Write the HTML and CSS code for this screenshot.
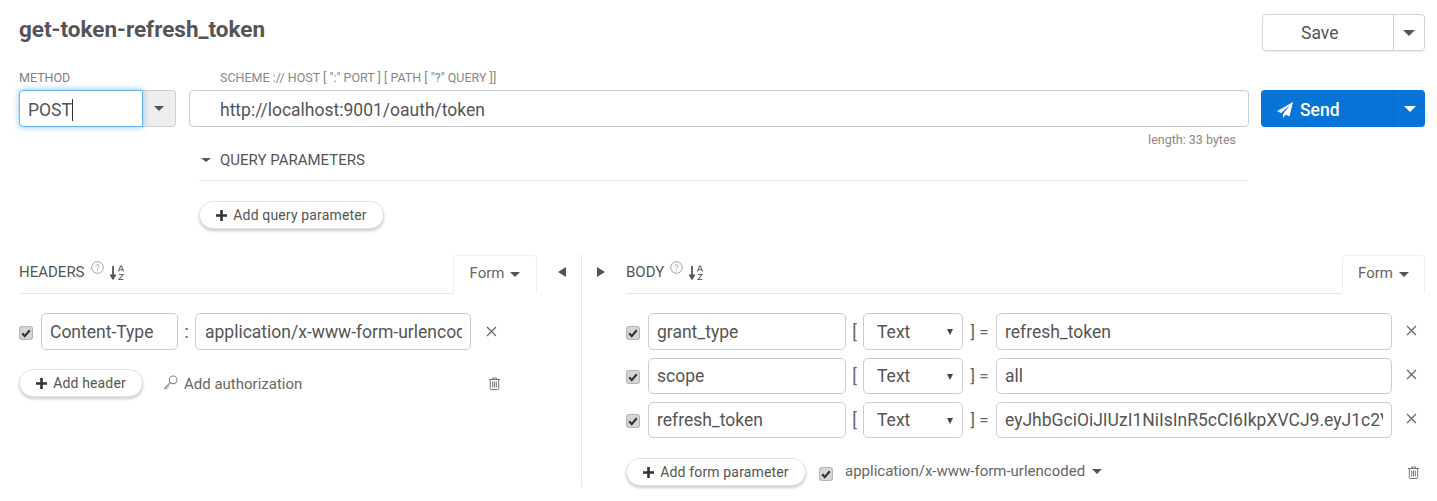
FILE: index.html
```html
<!DOCTYPE html>
<html lang="en">
<head>
<meta charset="utf-8">
<title>get-token-refresh_token</title>
<link rel="stylesheet" href="styles.css">
</head>
<body>
<svg class="defs" width="0" height="0" aria-hidden="true">
  <symbol id="check" viewBox="0 0 13 13">
    <rect x=".5" y=".5" width="12" height="12" rx="2.5" fill="#d6d6d6" stroke="#b4b4b4"/>
    <path d="M3 6.8 5.3 9.4 10 3.9" fill="none" stroke="#333" stroke-width="2"/>
  </symbol>
  <symbol id="help" viewBox="0 0 13 13">
    <circle cx="6.5" cy="6.5" r="5.8" fill="none" stroke="#999" stroke-width=".9"/>
    <path d="M4.8 5.2C4.9 3.2 8.2 3.3 8.2 5.1 8.2 6.3 6.5 6.4 6.5 7.8M6.5 8.9v1" fill="none" stroke="#999" stroke-width=".9"/>
  </symbol>
  <symbol id="sort" viewBox="0 0 15 16">
    <path d="M3 1v11M.5 9.5 3 13.5 5.500 9.500" fill="none" stroke="#555" stroke-width="1.800"/>
    <path d="M8.500 6.500 10.500 1h1l2 5.500M9.300 4.800h3.400M9 9.500h4L9 14.500h4.300" fill="none" stroke="#666" stroke-width="1.100"/>
  </symbol>
  <symbol id="trash" viewBox="0 0 12 13">
    <path d="M.5 2.500h11M4 2.500V1h4v1.500M1.800 2.500v9.200c0 .5.400.8.800.8h6.800c.4 0 .8-.3.800-.8V2.500M4.200 4.500v6M6 4.500v6M7.800 4.500v6" fill="none" stroke="#777" stroke-width="1"/>
  </symbol>
  <symbol id="x" viewBox="0 0 11 11">
    <path d="M1 1l9 9M10 1l-9 9" fill="none" stroke="#666" stroke-width="1.200"/>
  </symbol>
  <symbol id="plus" viewBox="0 0 11 11">
    <path d="M5.500 0v11M0 5.500h11" fill="none" stroke="#333" stroke-width="2.600"/>
  </symbol>
</svg>

<main class="page">
  <header class="top">
    <h1 class="title">get-token-refresh_token</h1>
    <div class="split save">
      <span class="split-main">Save</span>
      <span class="split-arrow"><i class="tri tri-down tri-dark"></i></span>
    </div>
  </header>

  <section class="request">
    <div class="method-col">
      <div class="label">METHOD</div>
      <div class="method">
        <div class="method-input">POST<span class="caret"></span></div>
        <div class="method-arrow"><i class="tri tri-small"></i></div>
      </div>
    </div>
    <div class="url-col">
      <div class="label label-url">SCHEME :// HOST [ ":" PORT ] [ PATH [ "?" QUERY ]]</div>
      <div class="url-input">http://localhost:9001/oauth/token</div>
      <div class="length">length: 33 bytes</div>
      <div class="query-head"><i class="tri tri-small tri-query"></i>QUERY PARAMETERS</div>
      <button class="pill pill-query"><svg class="plus"><use href="#plus"/></svg>Add query parameter</button>
    </div>
    <div class="split send">
      <span class="split-main">
        <svg class="plane" viewBox="0 0 16 16"><path d="M16 0 0 9.200l4.200 1.800L13 3.200 6 12v4l2.600-3.200 3.900 1.700Z" fill="#fff"/></svg>Send
      </span>
      <span class="split-arrow"><i class="tri tri-down tri-white"></i></span>
    </div>
  </section>

  <section class="panels">
    <div class="panel panel-headers">
      <div class="panel-head">
        <span class="panel-title">HEADERS</span>
        <svg class="help"><use href="#help"/></svg>
        <svg class="sort"><use href="#sort"/></svg>
        <span class="tab">Form <i class="tri tri-small"></i></span>
      </div>
      <div class="row">
        <svg class="check"><use href="#check"/></svg>
        <div class="field field-hname">Content-Type</div>
        <span class="sep">:</span>
        <div class="field field-hval"><span class="clip">application/x-www-form-urlencoded</span></div>
        <svg class="x x-head"><use href="#x"/></svg>
      </div>
      <div class="actions">
        <button class="pill pill-header"><svg class="plus"><use href="#plus"/></svg>Add header</button>
        <span class="auth">
          <svg class="key" viewBox="0 0 14 14"><circle cx="9.500" cy="4.500" r="3.600" fill="none" stroke="#888"/><path d="M7 7 1 13M2.500 11.500l1.500 1.500M4 10l1.200 1.200" fill="none" stroke="#888"/></svg>Add authorization
        </span>
        <svg class="trash trash-head"><use href="#trash"/></svg>
      </div>
    </div>

    <div class="toggle toggle-left"><i class="tri tri-left"></i></div>
    <div class="toggle toggle-right"><i class="tri tri-right"></i></div>

    <div class="panel panel-body">
      <div class="panel-head">
        <span class="panel-title">BODY</span>
        <svg class="help"><use href="#help"/></svg>
        <svg class="sort"><use href="#sort"/></svg>
        <span class="tab">Form <i class="tri tri-small"></i></span>
      </div>
      <div class="body-rows">
        <div class="row">
          <svg class="check"><use href="#check"/></svg>
          <div class="field field-name">grant_type</div>
          <span class="bracket">[</span>
          <div class="field field-type">Text<i class="tri tri-select"></i></div>
          <span class="bracket bracket-end">] =</span>
          <div class="field field-val">refresh_token</div>
          <svg class="x"><use href="#x"/></svg>
        </div>
        <div class="row">
          <svg class="check"><use href="#check"/></svg>
          <div class="field field-name">scope</div>
          <span class="bracket">[</span>
          <div class="field field-type">Text<i class="tri tri-select"></i></div>
          <span class="bracket bracket-end">] =</span>
          <div class="field field-val">all</div>
          <svg class="x"><use href="#x"/></svg>
        </div>
        <div class="row">
          <svg class="check"><use href="#check"/></svg>
          <div class="field field-name">refresh_token</div>
          <span class="bracket">[</span>
          <div class="field field-type">Text<i class="tri tri-select"></i></div>
          <span class="bracket bracket-end">] =</span>
          <div class="field field-val"><span class="clip">eyJhbGciOiJIUzI1NiIsInR5cCI6IkpXVCJ9.eyJ1c2VyX25hbWUiOiJhZG1pbiJ9</span></div>
          <svg class="x"><use href="#x"/></svg>
        </div>
      </div>
      <div class="body-actions">
        <button class="pill pill-form"><svg class="plus"><use href="#plus"/></svg>Add form parameter</button>
        <svg class="check check-enc"><use href="#check"/></svg>
        <span class="enc">application/x-www-form-urlencoded <i class="tri tri-small tri-enc"></i></span>
        <svg class="trash trash-body"><use href="#trash"/></svg>
      </div>
    </div>
  </section>
</main>
</body>
</html>
```

FILE: styles.css
```css
* { box-sizing: border-box; }
html, body { margin: 0; padding: 0; background: #fff; overflow: hidden; }
body { height: 501px; font-family: Roboto, "Liberation Sans", sans-serif; color: #555; }
.defs { position: absolute; }
.page { padding: 14px 12px 0 19px; }

.top { display: flex; justify-content: space-between; align-items: flex-start; height: 37px; }
.title { margin: 0; font-size: 22.500px; line-height: 30px; font-weight: 700; color: #555; }

.split { display: flex; width: 163px; height: 37px; border-radius: 4px; font-size: 17.500px; }
.split-main { flex: 1; display: flex; align-items: center; }
.split-arrow { width: 32px; display: flex; align-items: center; justify-content: center; }
.save { border: 1px solid #d5d5d5; box-shadow: 0 1px 1px rgba(0,0,0,.06); }
.save .split-main { padding-left: 38px; }
.save .split-arrow { border-left: 1px solid #d0d0d0; margin-left: 1px; width: 31px; }
.send { width: 164px; margin-left: 12px; margin-top: 23px; background: #0974d8; color: #fff; font-weight: 500; }
.send .split-main { padding: 2px 0 0 16px; }
.send .split-arrow { border-left: 1px solid #1568b8; }
.plane { width: 16px; height: 16px; margin-right: 7px; }

.tri { display: inline-block; width: 0; height: 0; border-style: solid; border-color: transparent; }
.tri-down { border-width: 6px 6.500px 0; }
.tri-dark { border-top-color: #555; }
.tri-white { border-top-color: #fff; }
.tri-small { border-width: 5px 5.500px 0; border-top-color: #555; }
.tri-left { border-width: 5.500px 8px 5.500px 0; border-right-color: #555; }
.tri-right { border-width: 5.500px 0 5.500px 8px; border-left-color: #555; }

.request { display: flex; align-items: flex-start; height: 187px; margin-top: 16px; }
.label { font-size: 12.500px; line-height: 14px; color: #808080; height: 19px; margin-top: 4px; white-space: nowrap; }
.label-url { padding-left: 31px; color: #888; }
.method-col { width: 157px; margin-right: 13px; flex: none; }
.method { display: flex; height: 37px; }
.method-input { width: 124px; border: 1px solid #69b4f4; border-radius: 4px 0 0 4px; box-shadow: 0 0 6px rgba(80,170,250,.7); font-size: 17.500px; line-height: 35px; padding: 2px 0 0 8px; background: #fff; position: relative; }
.caret { display: inline-block; width: 1px; height: 22px; background: #333; vertical-align: -5px; }
.method-arrow { width: 33px; background: #eee; border: 1px solid #d0d0d0; border-left: 0; border-radius: 0 4px 4px 0; display: flex; align-items: center; justify-content: center; }
.url-col { flex: 1; min-width: 0; }
.url-input { height: 37px; border: 1px solid #ccc; border-radius: 4px; font-size: 17.500px; line-height: 36px; padding: 1px 0 0 30px; }
.length { text-align: right; font-size: 12.500px; line-height: 14px; color: #888; padding-right: 13px; margin-top: 6px; }
.query-head { margin: 1px 1px 0 10px; height: 33px; font-size: 15px; line-height: 24px; border-bottom: 1px solid #e5e5e5; color: #555; }
.tri-query { margin: 0 9px 2px 2px; vertical-align: middle; border-width: 4.500px 5px 0; }

.pill { display: flex; align-items: center; justify-content: center; height: 28px; border: 1px solid #e2e2e2; border-radius: 14px; background: #fff; box-shadow: 0 2px 3px rgba(0,0,0,.2); font: 14px Roboto, sans-serif; color: #555; letter-spacing: .15px; padding: 0; flex: none; }
.plus { width: 11px; height: 11px; margin-right: 6px; }
.pill-query { width: 185px; margin: 20px 0 0 10px; }
.pill-header { width: 124px; }
.pill-form { width: 180px; }

.panels { display: flex; align-items: flex-start; height: 233px; }
.panel-head { display: flex; align-items: flex-start; height: 40px; border-bottom: 1px solid #e5e5e5; font-size: 15px; }
.panel-title { margin-top: 8px; line-height: 20px; }
.help { width: 13px; height: 13px; margin: 7px 0 0 6px; }
.sort { width: 15px; height: 16px; margin: 11px 0 0 6px; }
.tab { margin-left: auto; height: 39px; border: 1px solid #eee; border-bottom-color: #fff; border-radius: 4px 4px 0 0; display: flex; align-items: center; justify-content: center; gap: 6px; color: #666; margin-top: 1px; padding-bottom: 4px; }
.tab .tri { margin-top: 3px; }

.panel-headers { width: 518px; flex: none; }
.panel-headers .tab { width: 84px; }
.panel-body { flex: 1; min-width: 0; }
.panel-body .tab { width: 83px; }
.toggle { flex: none; display: flex; padding-top: 13px; height: 233px; }
.toggle-left { width: 45px; padding-left: 21px; border-right: 1px solid #e8e8e8; }
.toggle-right { width: 44px; padding-left: 15px; }

.row { display: flex; align-items: center; height: 37px; margin-top: 19px; font-size: 17.500px; }
.check { width: 14px; height: 14px; flex: none; margin-top: 2px; }
.field { height: 100%; border: 1px solid #ccc; border-radius: 5px; padding: 0 8px; line-height: 36px; white-space: nowrap; flex: none; background: #fff; position: relative; }
.clip { display: block; overflow: hidden; }
.field-hname { width: 137px; margin-left: 8px; }
.sep { width: 17px; text-align: center; flex: none; }
.field-hval { width: 276px; padding-left: 9px; }
.x { width: 11px; height: 11px; flex: none; }
.x-head { margin-left: 15px; }

.actions { display: flex; align-items: center; margin-top: 19px; font-size: 15px; }
.auth { display: flex; align-items: center; margin: 1px 0 0 20px; color: #666; }
.key { width: 15px; height: 15px; margin: -3px 6px 0 0; }
.trash { width: 13px; height: 13px; flex: none; }
.trash-head { margin-left: 186px; }

.body-rows .row { margin-top: 7.500px; height: 36.500px; }
.body-rows .row .field { line-height: 34px; }
.body-rows .row:first-child { margin-top: 19px; height: 37px; }
.body-rows .row:first-child .field { line-height: 36px; }
.field-name { width: 198px; margin-left: 8px; }
.bracket { flex: none; width: 17px; text-align: center; color: #666; }
.field-type { width: 100px; padding-left: 13px; }
.tri-select { position: absolute; right: 9px; top: 15px; border-width: 6px 3.500px 0; border-top-color: #444; }
.bracket-end { width: 33px; text-align: center; font-size: 17px; }
.field-val { width: 396px; }
.body-rows .x { margin-left: 14px; margin-top: -3px; }

.body-actions { display: flex; align-items: center; margin-top: 20px; height: 28px; font-size: 15px; }
.check-enc { margin-left: 13px; margin-top: 3px; }
.enc { margin-left: 12px; margin-top: -3px; color: #666; white-space: nowrap; }
.tri-enc { margin-left: 3px; vertical-align: 2px; }
.trash-body { margin-left: auto; margin-right: 5px; }
```
